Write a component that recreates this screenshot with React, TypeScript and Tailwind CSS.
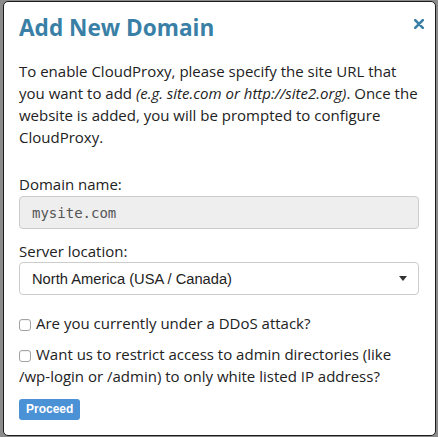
const CloseIcon = () => (
  <svg width="10" height="10" viewBox="0 0 10 10" className="block">
    <path d="M1.2 1.2 L8.8 8.8 M8.8 1.2 L1.2 8.8" stroke="#3a7fa6" strokeWidth="2.6" strokeLinecap="round" />
  </svg>
)

const Caret = () => (
  <svg width="8" height="5" viewBox="0 0 8 5" className="block">
    <path d="M0 0 H8 L4 5 Z" fill="#333" />
  </svg>
)

const Check = () => (
  <span className="inline-block w-[12px] h-[12px] mr-[5px] align-[-2px] rounded-[3px] border border-[#a3a3a3] bg-white shadow-[inset_0_1px_1px_rgba(0,0,0,0.06)]" />
)

export default function App() {
  return (
    <div className="w-[438px] h-[437px] bg-[#8b8b8b] pt-[1px] pl-[3px] overflow-hidden">
      <div
        className="w-[433px] h-[435px] bg-white border border-[#1c1c1c] rounded-[5px] pl-[15px] pr-[16px] pt-[10px] text-[#222] text-[15px] leading-[22px]"
        style={{ fontFamily: '"Open Sans", sans-serif' }}
      >
        <div className="flex justify-between items-start -mr-[5px]">
          <h2 className="text-[22.6px] leading-[31px] font-bold text-[#3a7fa6]">Add New Domain</h2>
          <button className="mt-[7px]"><CloseIcon /></button>
        </div>

        <p className="mt-[17px]">
          To enable CloudProxy, please specify the site URL that you want to add{' '}
          <em>(e.g. site.com or http://site2.org)</em>. Once the website is added, you will be prompted to configure
          CloudProxy.
        </p>

        <label className="block mt-[25px]">Domain name:</label>
        <div
          className="mt-[1px] h-[33px] flex items-center px-[12px] bg-[#eee] border border-[#ccc] rounded-[4px] text-[14px] text-[#555]"
          style={{ fontFamily: '"DejaVu Sans Mono", monospace' }}
        >
          mysite.com
        </div>

        <label className="block mt-[11px]">Server location:</label>
        <div
          className="h-[33px] flex items-center justify-between pl-[12px] pr-[11px] bg-white border border-[#ccc] rounded-[4px] text-[14.7px] text-[#222]"
          style={{ fontFamily: '"Liberation Sans", Arial, sans-serif' }}
        >
          <span>North America (USA / Canada)</span>
          <Caret />
        </div>

        <label className="block mt-[17px]">
          <Check />Are you currently under a DDoS attack?
        </label>
        <label className="block mt-[9px]">
          <Check />Want us to restrict access to admin directories (like /wp-login or /admin) to only white listed IP address?
        </label>

        <button
          className="mt-[12px] h-[21px] px-[7px] rounded-[3px] bg-[#4b91d6] text-white text-[12px] font-bold leading-[21px]"
          style={{ fontFamily: '"Liberation Sans", Arial, sans-serif' }}
        >
          Proceed
        </button>
      </div>
    </div>
  )
}
